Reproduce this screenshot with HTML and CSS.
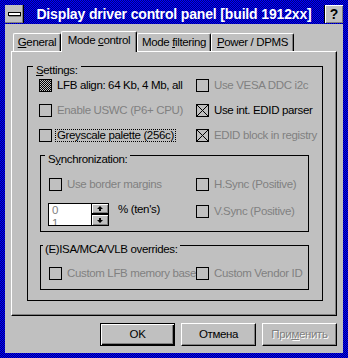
FILE: index.html
```html
<!DOCTYPE html>
<html lang="ru">
<head>
  <meta charset="UTF-8" />
  <title>Display driver control panel</title>
  <link rel="stylesheet" href="styles.css">
</head>
<body>
  <div class="window">

    <!-- Title bar -->
    <div class="titlebar">
      <div class="sysmenu">
        <svg width="18" height="18" viewBox="0 0 18 18">
          <rect x="3.5" y="7.5" width="12" height="3" fill="#fff" stroke="#000" />
          <rect x="4" y="11" width="12" height="1" fill="#808080" />
        </svg>
      </div>
      <div class="title">Display driver control panel [build 1912xx]</div>
      <div class="help">?</div>
    </div>

    <div class="dialog">

      <!-- Tabs -->
      <div class="tabs">
        <div class="tab"><u>G</u>eneral</div>
        <div class="tab active">Mode <u>c</u>ontrol</div>
        <div class="tab">Mode <u>f</u>iltering</div>
        <div class="tab"><u>P</u>ower / DPMS</div>
      </div>

      <!-- Tab page -->
      <div class="page">
        <div class="group settings">
          <div class="group-label"><u>S</u>ettings:</div>
          <div class="options">
            <div class="check"><span class="box mixed"></span><span class="label">LFB align: 64 Kb, 4 Mb, all</span></div>
            <div class="check disabled"><span class="box"></span><span class="label">Use VESA DDC i2c</span></div>
            <div class="check disabled"><span class="box"></span><span class="label">Enable USWC (P6+ CPU)</span></div>
            <div class="check"><span class="box"><svg viewBox="0 0 11 11"><path d="M0 0L11 11M11 0L0 11" /></svg></span><span class="label">Use int. EDID parser</span></div>
            <div class="check"><span class="box"></span><span class="label focus">Greyscale palette (256c)</span></div>
            <div class="check disabled"><span class="box"><svg viewBox="0 0 11 11"><path d="M0 0L11 11M11 0L0 11" /></svg></span><span class="label">EDID block in registry</span></div>
          </div>

          <div class="group sync">
            <div class="group-label">S<u>y</u>nchronization:</div>
            <div class="sync-grid">
              <div class="check disabled"><span class="box"></span><span class="label">Use border margins</span></div>
              <div class="check disabled"><span class="box"></span><span class="label">H.Sync (Positive)</span></div>
              <div class="spin-row">
                <div class="spin">
                  <div class="spin-value">0<br>1</div>
                  <div class="spin-btns">
                    <div class="spin-btn">
                      <svg width="6" height="5" viewBox="0 0 6 5"><path d="M3 0L6 3H4V5H2V3H0Z" /></svg>
                    </div>
                    <div class="spin-btn">
                      <svg width="6" height="5" viewBox="0 0 6 5"><path d="M3 5L6 2H4V0H2V2H0Z" /></svg>
                    </div>
                  </div>
                </div>
                <span class="spin-label">% (ten's)</span>
              </div>
              <div class="check disabled vsync"><span class="box"></span><span class="label">V.Sync (Positive)</span></div>
            </div>
          </div>

          <div class="group isa">
            <div class="group-label">(E)ISA/MCA/VLB overrides:</div>
            <div class="isa-grid">
              <div class="check disabled"><span class="box"></span><span class="label">Custom LFB memory base</span></div>
              <div class="check disabled"><span class="box"></span><span class="label">Custom Vendor ID</span></div>
            </div>
          </div>
        </div>
      </div>

      <!-- Dialog buttons -->
      <div class="buttons">
        <button class="btn default">OK</button>
        <button class="btn">Отмена</button>
        <button class="btn" disabled>При<u>м</u>енить</button>
      </div>

    </div>
  </div>
</body>
</html>
```

FILE: styles.css
```css
body {
  margin: 0;
  font-family: "Liberation Sans", Arial, sans-serif;
  font-size: 11.5px;
  letter-spacing: -0.35px;
  color: #000;
}

u {
  text-decoration: underline;
  text-underline-offset: 1px;
}

.window {
  width: 348px;
  height: 358px;
  box-sizing: border-box;
  padding: 5px;
  display: flex;
  flex-direction: column;
  background: repeating-conic-gradient(#000080 0 25%, #0000ff 0 50%) 0 0 / 2px 2px;
}

/* Title bar */
.titlebar {
  height: 19px;
  display: flex;
}

.sysmenu {
  width: 18px;
  height: 18px;
  border-right: 1px solid #000;
  background-color: #c0c0c0;
  box-shadow: inset -1px -1px #808080;
}

.sysmenu svg {
  display: block;
}

.title {
  flex: 1;
  color: #fff;
  font-weight: bold;
  font-size: 14px;
  letter-spacing: -0.15px;
  line-height: 19px;
  text-align: center;
  white-space: nowrap;
}

.help {
  width: 18px;
  height: 18px;
  border-left: 1px solid #000;
  background-color: #c0c0c0;
  box-shadow: inset 1px 1px #fff, inset -1px -1px #808080;
  font-weight: bold;
  font-size: 14px;
  letter-spacing: 0;
  line-height: 18px;
  text-align: center;
}

/* Dialog body */
.dialog {
  flex: 1;
  background-color: #c0c0c0;
  padding: 7px 6px 7px 6px;
  display: flex;
  flex-direction: column;
}

.tabs {
  display: grid;
  grid-template-columns: 48px 76px 74px 83px;
  align-items: end;
  height: 21px;
  margin: 0 0 -1px 2px;
  position: relative;
  z-index: 1;
}

.tab {
  height: 18px;
  box-sizing: border-box;
  margin-bottom: 1px;
  padding-top: 2px;
  border: 1px solid;
  border-color: #fff #000 transparent #fff;
  border-bottom: none;
  border-radius: 2px 2px 0 0;
  box-shadow: inset -1px 0 #808080;
  background-color: #c0c0c0;
  line-height: 13px;
  text-align: center;
  white-space: nowrap;
}

.tab.active {
  height: 21px;
  margin-bottom: 0;
}

.page {
  height: 265px;
  box-sizing: border-box;
  padding: 14px 13px 14px 15px;
  border: 1px solid;
  border-color: #fff #000 #000 #fff;
  box-shadow: inset -1px -1px #808080;
}

/* Group boxes */
.group {
  border: 1px solid #000;
}

.group-label {
  width: fit-content;
  margin: -3px 0 0 5px;
  padding: 0 3px;
  background-color: #c0c0c0;
  line-height: 13px;
  white-space: nowrap;
}

.sync .group-label {
  margin-left: 4px;
}

.isa .group-label {
  margin-left: 2px;
  padding: 0 2px;
}

.options {
  display: grid;
  grid-template-columns: 157px auto;
  row-gap: 12px;
  margin: 2px 0 0 11px;
}

.sync {
  margin: 13px 13px 0 12px;
  padding-bottom: 5px;
}

.sync-grid,
.isa-grid {
  display: grid;
  grid-template-columns: 147px auto;
  row-gap: 12px;
  margin: 12px 0 0 8px;
}

.isa {
  margin: 13px 13px 10px 12px;
  padding-bottom: 9px;
}

.isa-grid {
  margin-top: 11px;
}

/* Check boxes */
.check {
  display: flex;
  align-items: center;
  gap: 3px;
  height: 13px;
  white-space: nowrap;
}

.box {
  flex: none;
  width: 13px;
  height: 13px;
  box-sizing: border-box;
  border: 1px solid #000;
}

.box svg {
  display: block;
  width: 11px;
  height: 11px;
  stroke: #000;
  stroke-width: 1;
}

.box.mixed {
  background: repeating-conic-gradient(#000 0 25%, #c0c0c0 0 50%) 0 0 / 2px 2px;
}

.label {
  padding: 0 1px;
  border: 1px solid transparent;
  line-height: 11px;
}

.label.focus {
  border: 1px dotted #000;
}

.disabled .label {
  color: #808080;
}

.vsync {
  align-self: start;
  margin-top: 2px;
}

/* Spin box */
.spin-row {
  display: flex;
  align-items: flex-start;
  gap: 9px;
  margin-left: -1px;
}

.spin {
  display: flex;
  width: 61px;
  height: 23px;
  box-sizing: border-box;
  border: 1px solid #000;
}

.spin-value {
  width: 43px;
  box-sizing: border-box;
  padding-left: 3px;
  border-right: 1px solid #000;
  background-color: #fff;
  color: #808080;
  line-height: 13px;
  overflow: hidden;
}

.spin-btns {
  flex: 1;
  display: flex;
  flex-direction: column;
  gap: 2px;
  background-color: #000;
}

.spin-btn {
  height: 9px;
  display: flex;
  align-items: center;
  justify-content: center;
  background-color: #c0c0c0;
  box-shadow: inset 1px 1px #fff, inset -1px -1px #808080;
}

.spin-btn + .spin-btn {
  height: 10px;
}

.spin-btn svg {
  fill: #000;
}

.spin-label {
  line-height: 13px;
}

/* Buttons */
.buttons {
  display: flex;
  justify-content: flex-end;
  gap: 6px;
  margin-top: 7px;
}

.btn {
  width: 75px;
  height: 23px;
  box-sizing: border-box;
  padding: 0;
  border: 1px solid;
  border-color: #fff #000 #000 #fff;
  box-shadow: inset -1px -1px #808080;
  background-color: #c0c0c0;
  color: #000;
  font-family: inherit;
  font-size: 11.5px;
  font-weight: normal;
  letter-spacing: inherit;
  line-height: 13px;
}

.btn.default {
  border-color: #000;
  box-shadow: inset 1px 1px #fff, inset -1px -1px #000, inset -2px -2px #808080;
}

.btn:disabled {
  color: #808080;
  text-shadow: 1px 1px #fff;
}
```
